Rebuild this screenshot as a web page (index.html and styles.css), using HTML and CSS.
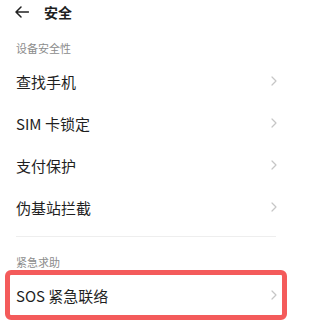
FILE: index.html
```html
<!DOCTYPE html>
<html lang="zh-CN">
<head>
<meta charset="utf-8">
<title>安全</title>
<link rel="stylesheet" href="styles.css">
</head>
<body>
<div class="page">
  <header class="header">
    <svg class="back" width="14" height="12" viewBox="0 0 14 12" aria-hidden="true">
      <path d="M13.5 6H1.2M6 1L1 6l5 5" fill="none" stroke="#222" stroke-width="1.5" stroke-linecap="round" stroke-linejoin="round"/>
    </svg>
    <h1 class="title">安全</h1>
  </header>

  <div class="label label-first">设备安全性</div>
  <ul class="list">
    <li class="row"><span>查找手机</span><svg class="chev" width="6" height="10" viewBox="0 0 6 10"><path d="M1 1l4 4-4 4"/></svg></li>
    <li class="row"><span>SIM 卡锁定</span><svg class="chev" width="6" height="10" viewBox="0 0 6 10"><path d="M1 1l4 4-4 4"/></svg></li>
    <li class="row"><span>支付保护</span><svg class="chev" width="6" height="10" viewBox="0 0 6 10"><path d="M1 1l4 4-4 4"/></svg></li>
    <li class="row"><span>伪基站拦截</span><svg class="chev" width="6" height="10" viewBox="0 0 6 10"><path d="M1 1l4 4-4 4"/></svg></li>
  </ul>
  <div class="divider"></div>

  <div class="label label-second">紧急求助</div>
  <div class="highlight">
    <div class="row row-sos"><span>SOS 紧急联络</span><svg class="chev" width="6" height="10" viewBox="0 0 6 10"><path d="M1 1l4 4-4 4"/></svg></div>
  </div>
</div>
</body>
</html>
```

FILE: styles.css
```css
* { box-sizing: border-box; }
html, body { margin: 0; padding: 0; background: #fff; }
body {
  font-family: "Noto Sans CJK SC", "Noto Sans", sans-serif;
  color: #1f1f1f;
}
.page { width: 292px; height: 325px; overflow: hidden; }

.header {
  height: 24px;
  display: flex;
  align-items: center;
  padding-left: 15px;
}
.back { display: block; flex: none; }
.title {
  margin: 0 0 0 15px;
  font-size: 14px;
  font-weight: 700;
  line-height: 24px;
}

.label {
  font-size: 11px;
  color: #8c8c8c;
  padding-left: 16px;
}
.label-first { margin-top: 12px; line-height: 24px; height: 24px; }
.label-second { padding-top: 17px; line-height: 16px; height: 33px; }

.list { list-style: none; margin: 0; padding: 0; }
.row {
  height: 42px;
  display: flex;
  align-items: center;
  justify-content: space-between;
  padding: 0 15px 0 16px;
  font-size: 15px;
}
.chev {
  display: block;
  flex: none;
  fill: none;
  stroke: #c6c6c6;
  stroke-width: 1.2;
  stroke-linecap: round;
  stroke-linejoin: round;
}

.divider {
  height: 1px;
  background: #eeeeee;
  margin: 8px 16px 0 16px;
}

.highlight {
  margin: 0 5px;
  height: 50px;
  border: 5px solid #f45b5b;
  border-radius: 6px;
}
.row-sos {
  height: 40px;
  padding: 0 5px 0 6px;
}
```
